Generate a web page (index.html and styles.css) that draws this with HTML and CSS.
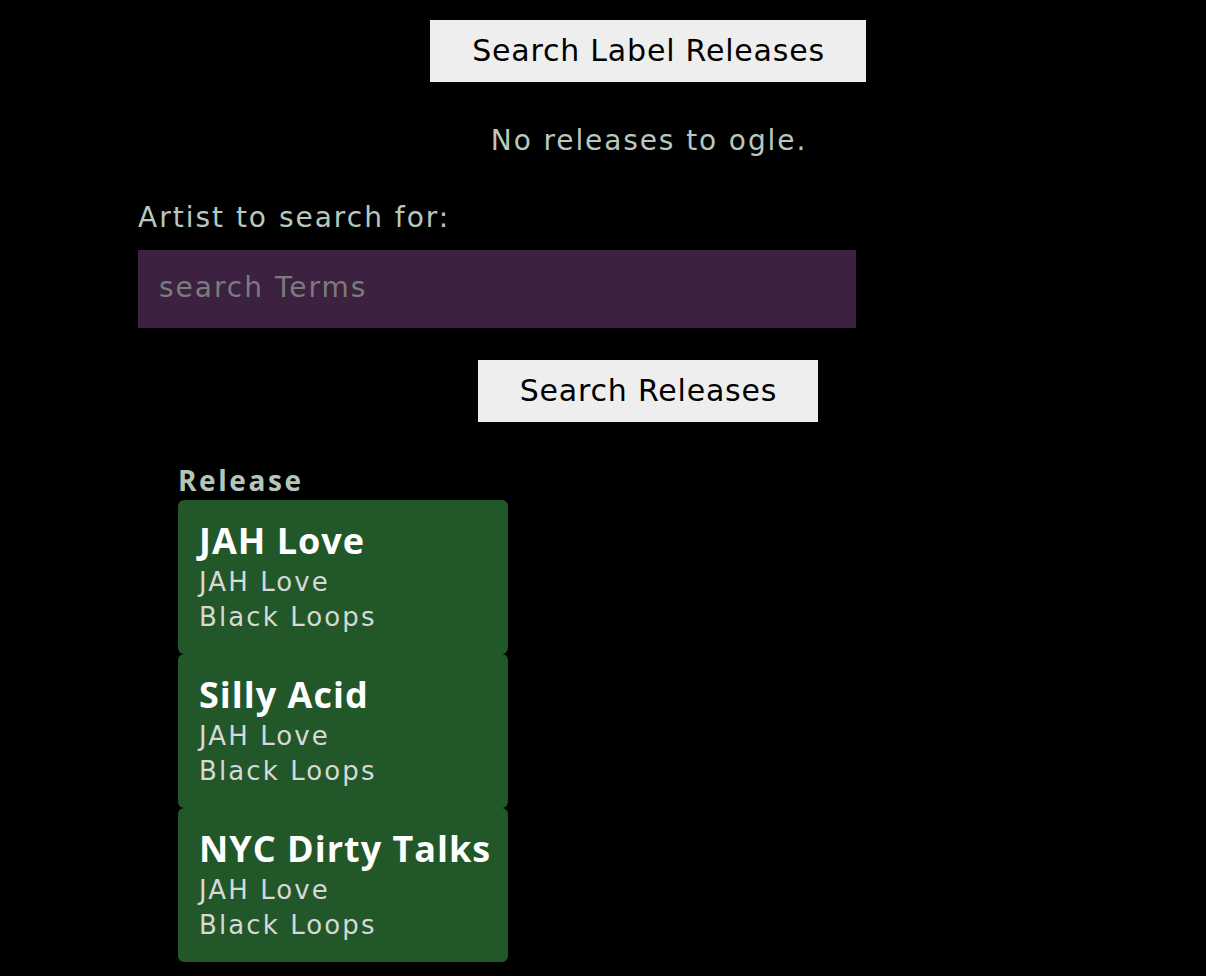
FILE: index.html
```html
<!DOCTYPE html>
<html>
<head>
<meta charset="utf-8">
<link rel="stylesheet" href="styles.css">
</head>
<body>
<div class="page">
  <div class="center-row top-row">
    <button class="btn btn-label">Search Label Releases</button>
  </div>
  <p class="empty">No releases to ogle.</p>
  <form class="search-form">
    <label class="field-label" for="artist">Artist to search for:</label>
    <input class="search-input" id="artist" type="text" placeholder="search Terms">
    <div class="center-row">
      <button class="btn btn-releases" type="button">Search Releases</button>
    </div>
  </form>
  <section class="results">
    <h3 class="results-title">Release</h3>
    <div class="card">
      <div class="card-title">JAH Love</div>
      <div class="card-sub first">JAH Love</div>
      <div class="card-sub">Black Loops</div>
    </div>
    <div class="card">
      <div class="card-title">Silly Acid</div>
      <div class="card-sub first">JAH Love</div>
      <div class="card-sub">Black Loops</div>
    </div>
    <div class="card">
      <div class="card-title">NYC Dirty Talks</div>
      <div class="card-sub first">JAH Love</div>
      <div class="card-sub">Black Loops</div>
    </div>
  </section>
</div>
</body>
</html>
```
FILE: styles.css
```css
html, body {
  margin: 0;
  padding: 0;
  background: #000;
}
body {
  font-family: "DejaVu Sans", "Open Sans", sans-serif;
  color: #b9c8bf;
}
.page {
  padding-left: 90px;
  padding-top: 20px;
  display: flex;
  flex-direction: column;
}
.center-row {
  display: flex;
  justify-content: center;
}
.btn {
  font-family: inherit;
  background: #eeeeee;
  color: #000;
  border: none;
  border-radius: 0;
  height: 62px;
  font-size: 30px;
  letter-spacing: 0.8px;
  padding: 0 0 2px 1px;
  cursor: pointer;
}
.btn-label { width: 436px; }
.btn-releases { width: 340px; }
.empty {
  margin: 39px 0 0;
  padding-left: 2px;
  text-align: center;
  font-size: 28px;
  line-height: 40px;
  letter-spacing: 1.9px;
}
.search-form {
  margin: 39px 0 0 48px;
  display: flex;
  flex-direction: column;
}
.field-label {
  font-size: 28px;
  line-height: 36px;
  letter-spacing: 2px;
}
.search-input {
  margin-top: 14px;
  width: 718px;
  height: 78px;
  box-sizing: border-box;
  border: none;
  outline: none;
  background: #3d2140;
  padding: 0 21px 3px;
  font-family: inherit;
  font-size: 28px;
  letter-spacing: 2px;
  color: #ddd;
}
.search-input::placeholder {
  color: #7b7b7b;
}
.search-form .center-row {
  margin-top: 32px;
  margin-left: -48px;
}
.results {
  margin-left: 88px;
  margin-top: 38px;
  display: flex;
  flex-direction: column;
}
.results-title {
  margin: 0;
  font-family: "Open Sans", "DejaVu Sans", sans-serif;
  font-size: 28px;
  line-height: 40px;
  font-weight: 700;
  letter-spacing: 2.6px;
  color: #b3c6b9;
}
.card {
  width: 330px;
  height: 154px;
  box-sizing: border-box;
  background: #22572a;
  border-radius: 6px;
  padding: 19px 20px 0 21px;
}
.card-title {
  font-family: "Open Sans", "DejaVu Sans", sans-serif;
  font-size: 36px;
  font-weight: 700;
  line-height: 44px;
  letter-spacing: 1px;
  color: #fff;
  white-space: nowrap;
}
.card-sub {
  font-size: 26px;
  line-height: 35px;
  color: #d6d9d6;
  letter-spacing: 2.1px;
}
.card-sub.first {
  margin-top: 2px;
}
```
